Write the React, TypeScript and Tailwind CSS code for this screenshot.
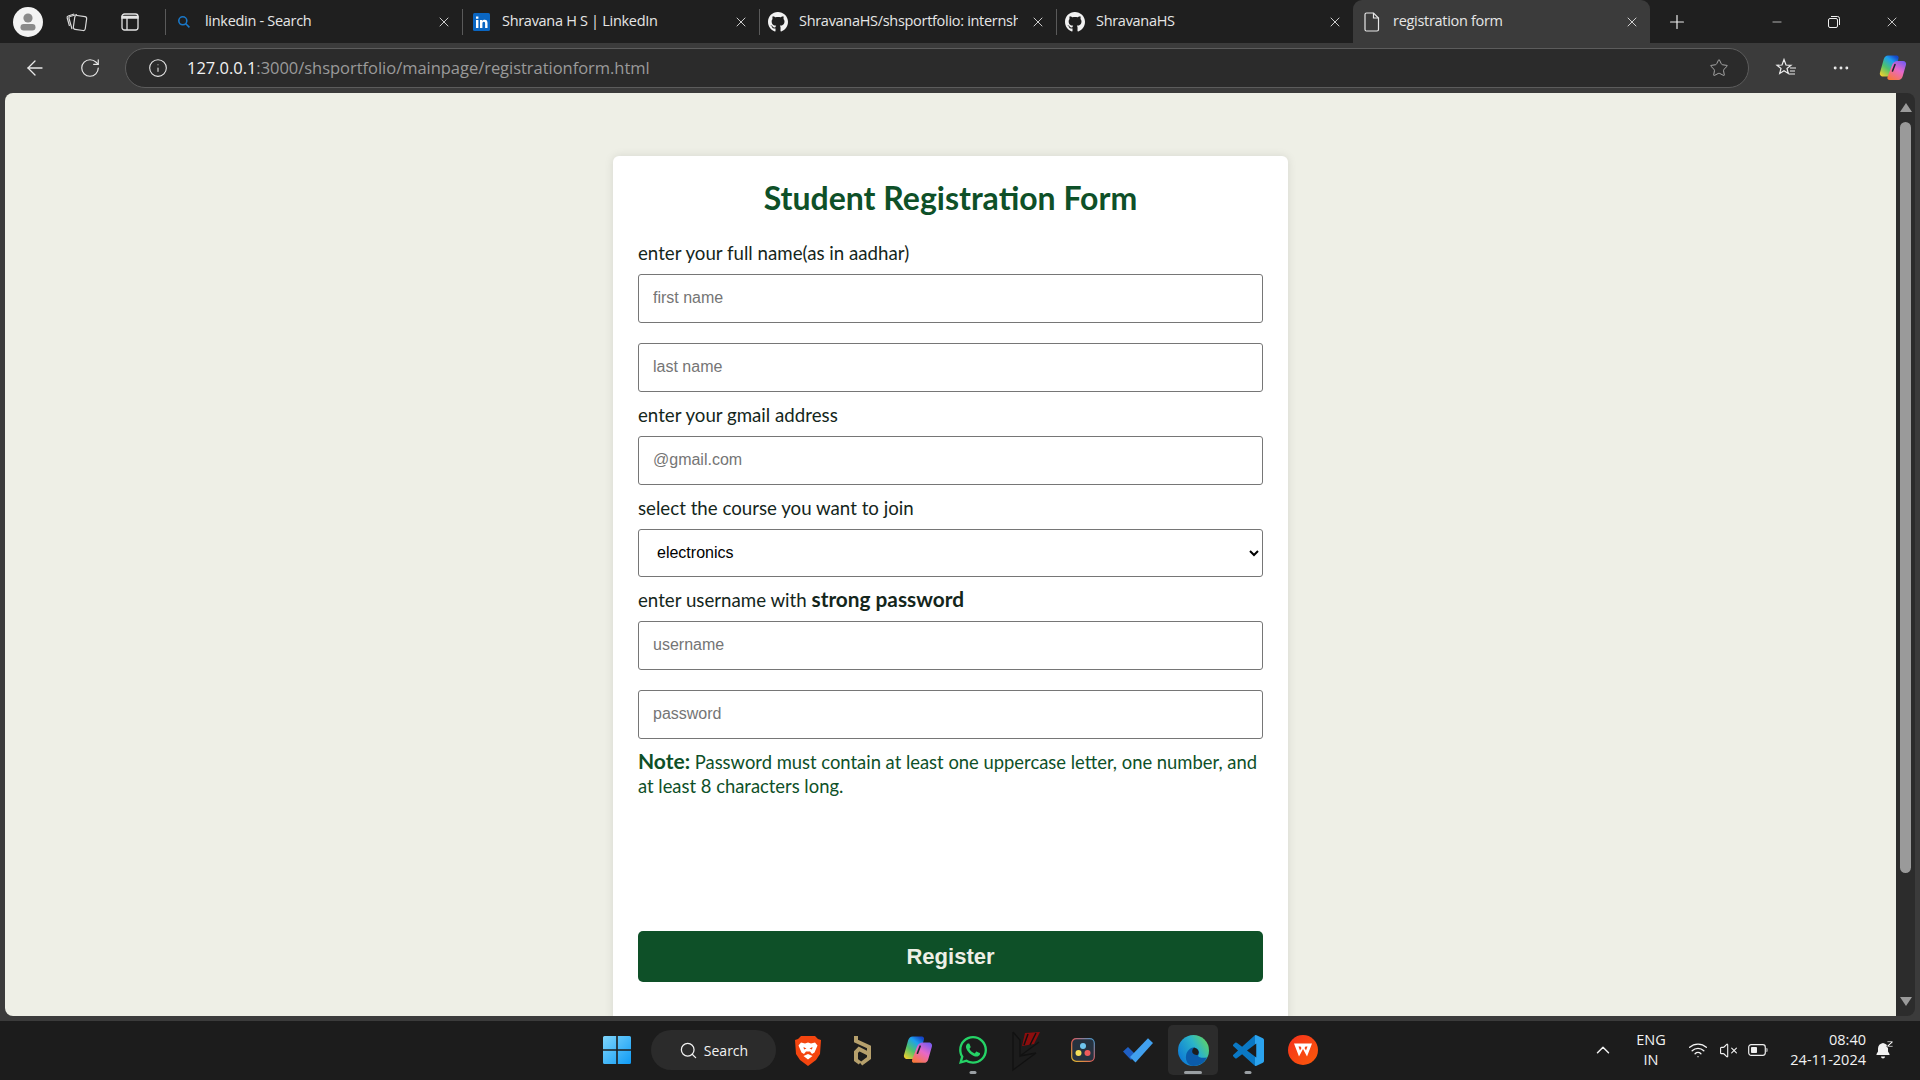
import React from 'react';
import { ArrowLeft, RotateCw, Info, Star, X, Plus, Minus, Search, Wifi, ChevronUp, VolumeX, MoreHorizontal } from 'lucide-react';
import { FaGithub, FaWhatsapp } from 'react-icons/fa';

const Profile = () => (
    <svg width="30" height="30" viewBox="0 0 30 30">
        <circle cx="15" cy="15" r="15" fill="#f3f3f3" />
        <circle cx="15" cy="11" r="4.6" fill="#8a8a8a" />
        <rect x="7.5" y="17" width="15" height="6.5" rx="3.2" fill="#8a8a8a" />
    </svg>
);

const Collections = () => (
    <svg width="22" height="22" viewBox="0 0 22 22" fill="none" stroke="#d8d8d8" strokeWidth="1.2">
        <rect x="8" y="5" width="12" height="14" rx="2" transform="rotate(8 14 12)" />
        <path d="M6 18 3 7.5c-.3-1 .2-1.8 1-2l7-2" />
        <path d="M3.5 15 1.2 7c-.3-1 .1-1.7 1-2l6-2" />
    </svg>
);

const VerticalTabs = () => (
    <svg width="18" height="18" viewBox="0 0 18 18" fill="none" stroke="#e4e4e4" strokeWidth="1.3">
        <rect x="1" y="1" width="16" height="16" rx="2.5" />
        <path d="M1 3.5h16v1.5H1z" fill="#e4e4e4" />
        <path d="M6 5v12" />
    </svg>
);

const TabIconSearch = () => (
    <svg width="14" height="14" viewBox="0 0 14 14" fill="none" stroke="#1a78c9" strokeWidth="1.6">
        <circle cx="5.8" cy="5.8" r="4" />
        <path d="m8.8 8.8 3.6 3.6" />
    </svg>
);

const LinkedIn = () => (
    <svg width="17" height="18" viewBox="0 0 17 18">
        <rect width="17" height="18" rx="1.5" fill="#0a66c2" />
        <path d="M3 7h2.4v8H3zM3 3.4h2.4v2.3H3zM7 7h2.3v1.1c.5-.8 1.3-1.3 2.4-1.3 2 0 2.8 1.2 2.8 3.3V15h-2.4v-4.4c0-1.1-.3-1.8-1.2-1.8-1 0-1.5.7-1.5 1.9V15H7z" fill="#fff" />
    </svg>
);

const DocIcon = () => (
    <svg width="16" height="20" viewBox="0 0 16 20" fill="none" stroke="#e8e8e8" strokeWidth="1.2">
        <path d="M2.5 1h7L14.5 6v11.5a1.5 1.5 0 0 1-1.5 1.5H2.5A1.5 1.5 0 0 1 1 17.5v-15A1.5 1.5 0 0 1 2.5 1z" />
        <path d="M9.5 1v5h5" />
    </svg>
);

const Copilot = ({ size, id }: { size: number; id: string }) => (
    <svg width={size} height={size} viewBox="0 0 28 28">
        <defs>
            <linearGradient id={`${id}a`} x1="0.1" y1="1" x2="0.8" y2="0">
                <stop offset="0" stopColor="#f7d02c" />
                <stop offset="0.4" stopColor="#4fc26b" />
                <stop offset="0.75" stopColor="#1d9ff0" />
                <stop offset="1" stopColor="#1546c8" />
            </linearGradient>
            <linearGradient id={`${id}b`} x1="0.8" y1="0" x2="0.2" y2="1">
                <stop offset="0" stopColor="#7a5cf0" />
                <stop offset="0.45" stopColor="#e868c8" />
                <stop offset="1" stopColor="#f9783a" />
            </linearGradient>
        </defs>
        <path d="M9 1.500h8.500c1.600 0 2.600 1.400 2 3L15 20c-.6 1.700-1.800 2.500-3.400 2.500H4c-2.200 0-3.700-2-3-4L4.800 5C5.600 2.800 7 1.500 9 1.500z" fill={`url(#${id}a)`} />
        <path d="M18 7h6c2.200 0 3.600 1.800 3 3.800l-3.500 12c-.6 2-2 3.200-4 3.200h-9c-1.600 0-2.600-1.400-2-3l5-13c.6-1.500 3-3 4.500-3z" fill={`url(#${id}b)`} />
        <path d="M16 10.500 13.500 17" stroke="#20242c" strokeWidth="1.600" strokeLinecap="round" />
    </svg>
);

const Brave = () => (
    <svg width="26" height="31" viewBox="0 0 26 31">
        <path d="M6 1h14l3 3 3 1-1 14-4 6-8 6-8-6-4-6L0 5l3-1z" fill="#f4450f" />
        <path d="M13 24.500 8.500 21l4.500-2 4.500 2zM6 7.500l4 1 3-1 3 1 4-1 2.500 3-3 7-2.500 1.500-2-2.500h-4L9 19l-2.500-1.500-3-7z" fill="#fff" />
        <path d="M8.500 12l3 1.500-2.500 1zM17.500 12l-3 1.500 2.500 1z" fill="#f4450f" />
    </svg>
);

const GoldMark = () => (
    <svg width="22" height="32" viewBox="0 0 22 32" fill="none" stroke="#b6a06c" strokeWidth="4">
        <path d="M4 2v5l13 6v11l-8 6" />
        <path d="M17 20 7 15 4 18v8l4 3" />
    </svg>
);

const Kite = () => (
    <svg width="32" height="44" viewBox="0 0 32 44" fill="none">
        <path d="M13 5 28 4 22 16 10 18z" fill="#8c0d0d" />
        <path d="M1 4 8 12v16l19-14M1 4v38l23-17-16 3" stroke="#111" strokeWidth="1.300" />
        <path d="M16 6 12 17M24 5 18 17" stroke="#111" strokeWidth="1.500" />
    </svg>
);

const Davinci = () => (
    <svg width="24" height="24" viewBox="0 0 24 24">
        <defs>
            <linearGradient id="dvb" x1="0" y1="1" x2="1" y2="0">
                <stop offset="0" stopColor="#d9b92e" />
                <stop offset="0.5" stopColor="#e05a5a" />
                <stop offset="1" stopColor="#3f9bd0" />
            </linearGradient>
        </defs>
        <rect x="0.700" y="0.700" width="22.600" height="22.600" rx="4.500" fill="#26323f" stroke="url(#dvb)" strokeWidth="1.200" />
        <circle cx="12" cy="8" r="3" fill="#6fc6ef" />
        <circle cx="7.500" cy="15" r="3" fill="#f4e05a" />
        <circle cx="16.500" cy="15" r="3" fill="#ef5b5b" />
    </svg>
);

const TodoCheck = () => (
    <svg width="32" height="26" viewBox="0 0 32 26">
        <path d="M1 14.500 6 10l8 8-5 5z" fill="#1f5fc4" />
        <path d="M26 1.200 31 6 13.500 25.500 8 20z" fill="#41a0ee" />
    </svg>
);

const Edge = () => (
    <svg width="31" height="31" viewBox="0 0 24 24">
        <defs>
            <linearGradient id="edgeg" x1="0.95" y1="0.2" x2="0.05" y2="0.75">
                <stop offset="0" stopColor="#5ed26a" />
                <stop offset="0.4" stopColor="#2bb4c9" />
                <stop offset="1" stopColor="#0e7cd6" />
            </linearGradient>
        </defs>
        <circle cx="12" cy="12" r="12" fill="url(#edgeg)" />
        <path d="M22.500 17.500c-2 4-6 6.500-10.500 6.500-2 0-3.600-1-4.700-2.500-1-1.700-1.500-3.500-1-6 .6-3.200 3-5.400 5.500-5.800 2.500 0 4.500 1.800 4.600 4 .1 1-.8 1.700-.8 2.300 0 1 2 1.700 3.700 1.700 1 0 2-.1 3.200-.2z" fill="#0b5cab" />
        <path d="M11 9.500c2.700 0 5 1.800 5 4 0 .6-.8 1.300-.8 2-2.400-.3-4.200-1-4.200-2.800 0-1.300.6-2.400 1.800-2.800-.6-.3-1.200-.4-1.800-.4z" fill="#1d1d1d" />
    </svg>
);

const VsCode = () => (
    <svg width="31" height="31" viewBox="0 0 24 24">
        <defs>
            <linearGradient id="vsg" x1="0" y1="0" x2="1" y2="0">
                <stop offset="0.7" stopColor="#0a78c4" />
                <stop offset="0.7" stopColor="#2ba3ee" />
            </linearGradient>
        </defs>
        <path d="M23.150 2.587 18.210.21a1.494 1.494 0 0 0-1.705.29l-9.460 8.630-4.120-3.128a.999.999 0 0 0-1.276.057L.327 7.261A1 1 0 0 0 .326 8.740L3.899 12 .326 15.260a1 1 0 0 0 .001 1.479L1.650 17.940a.999.999 0 0 0 1.276.057l4.120-3.128 9.460 8.630a1.492 1.492 0 0 0 1.704.29l4.942-2.377A1.500 1.500 0 0 0 24 20.060V3.939a1.500 1.500 0 0 0-.850-1.352zm-5.146 14.861L10.826 12l7.178-5.448v10.896z" fill="url(#vsg)" />
    </svg>
);

const Wps = () => (
    <svg width="30" height="30" viewBox="0 0 30 30">
        <defs>
            <linearGradient id="wpsg" x1="0" y1="0" x2="1" y2="1">
                <stop offset="0" stopColor="#f5301c" />
                <stop offset="1" stopColor="#fb5b0a" />
            </linearGradient>
        </defs>
        <circle cx="15" cy="15" r="15" fill="url(#wpsg)" />
        <path d="M6 8.500h18l-5 13-4-7.500-4 7.500zM10.500 11.500l1.500 4 1.500-2.500-1-1.500zM19.500 11.500l-1.500 4-1.500-2.500 1-1.500z" fill="#fff" fillRule="evenodd" />
    </svg>
);

const WindowsLogo = () => (
    <svg width="30" height="30" viewBox="0 0 30 30">
        <defs>
            <linearGradient id="wing" x1="0" y1="0" x2="1" y2="1">
                <stop offset="0" stopColor="#7fd5fb" />
                <stop offset="1" stopColor="#0f9bf5" />
            </linearGradient>
        </defs>
        <path d="M1 2.500A1.500 1.500 0 0 1 2.500 1h11.700v13.200H1zM15.800 1h11.700A1.500 1.500 0 0 1 29 2.500v11.700H15.800zM1 15.800h13.200V29H2.500A1.500 1.500 0 0 1 1 27.500zM15.800 15.800H29v11.700a1.500 1.500 0 0 1-1.500 1.500H15.800z" fill="url(#wing)" />
    </svg>
);

const Battery = () => (
    <svg width="20" height="14" viewBox="0 0 20 14" fill="none">
        <rect x="0.700" y="1.700" width="16.600" height="10.600" rx="2.500" stroke="#eee" strokeWidth="1.200" />
        <rect x="3" y="4" width="6" height="6" rx="0.800" fill="#eee" />
        <path d="M18.500 5v4c.8 0 1-.6 1-2s-.2-2-1-2z" fill="#eee" />
    </svg>
);

const BellSleep = () => (
    <svg width="18" height="20" viewBox="0 0 18 20" fill="#f2f2f2">
        <path d="M7 3c-3 .4-5 2.700-5 5.500v3L.5 14v1h13v-1L12 11.500V8.500C12 5.700 10 3.400 7 3zM5 16.500h4a2 2 0 0 1-4 0z" />
        <path d="M11 1h6v1.500l-3.500 3H17V7h-6V5.500L14.500 2.500H11z" stroke="#1c1c1c" strokeWidth="0.800" />
    </svg>
);

const Tab = ({ icon, title, active }: any) => (
    <div className={`flex items-center h-full w-[297px] pl-[9px] pr-[10px] shrink-0 ${active ? 'bg-[#3b3b3b] rounded-t-[9px]' : ''}`}>
        <div className="w-[20px] flex items-center justify-center shrink-0">{icon}</div>
        <span className="ml-[11px] -mt-[2px] flex-1 text-[14.5px] text-[#e6e6e6] whitespace-nowrap overflow-hidden tracking-[-0.3px]">{title}</span>
        <X size={16} strokeWidth={1.3} color="#e8e8e8" className="shrink-0 ml-[12px]" />
    </div>
);

const Sep = () => <div className="w-px h-[26px] bg-[#5a5a5a] shrink-0 -mr-px relative" />;

const Field = ({ placeholder, className }: any) => (
    <input
        placeholder={placeholder}
        className={`block w-full h-[49px] px-[14px] pb-[2px] bg-white border border-[#767676] rounded-[3px] text-[16px] font-['Liberation_Sans',Arial,sans-serif] placeholder:text-[#757575] ${className}`}
    />
);

const Label = ({ children, className }: any) => (
    <p className={`text-[18.7px] leading-[22px] text-[#14261b] ${className}`}>{children}</p>
);

const TaskIcon = ({ children, dot, active }: any) => (
    <div className={`relative w-[50px] mx-[2.5px] h-[50px] flex items-center justify-center rounded-[5px] shrink-0 ${active ? 'bg-[#2c2c2c]' : ''}`}>
        {children}
        {dot && <div className={`absolute bottom-[1px] left-1/2 -translate-x-1/2 h-[3.5px] rounded-full bg-[#9a9fa3] ${active ? 'w-[18px]' : 'w-[7px]'}`} />}
    </div>
);

export default function App() {
    return (
        <div className="w-[1920px] h-[1080px] flex flex-col overflow-hidden bg-[#3b3b3b] font-['Open_Sans',sans-serif]">
            {/* tab strip */}
            <div className="h-[43px] bg-[#1f1f1f] flex items-center shrink-0">
                <div className="ml-[13px] w-[30px]"><Profile /></div>
                <div className="ml-[23px]"><Collections /></div>
                <div className="ml-[33px]"><VerticalTabs /></div>
                <div className="ml-[26px]"><Sep /></div>
                <Tab icon={<TabIconSearch />} title="linkedin - Search" />
                <Sep />
                <Tab icon={<LinkedIn />} title="Shravana H S | LinkedIn" />
                <Sep />
                <Tab icon={<FaGithub size={22} color="#f2f2f2" />} title="ShravanaHS/shsportfolio: internship" />
                <Sep />
                <Tab icon={<FaGithub size={22} color="#f2f2f2" />} title="ShravanaHS" />
                <Tab icon={<DocIcon />} title="registration form" active />
                <Plus size={22} strokeWidth={1.3} color="#eee" className="ml-[16px]" />
                <Minus size={14} strokeWidth={1.2} color="#eee" className="ml-[82px]" />
                <svg width="14" height="14" viewBox="0 0 14 14" fill="none" stroke="#eee" className="ml-[43px]">
                    <rect x="1.500" y="3.500" width="9" height="9" rx="1.500" />
                    <path d="M4 1.500h6.500a2 2 0 0 1 2 2V10" />
                </svg>
                <X size={16} strokeWidth={1.2} color="#eee" className="ml-[43px]" />
            </div>

            {/* toolbar */}
            <div className="h-[50px] bg-[#3b3b3b] flex items-center shrink-0">
                <ArrowLeft size={24} strokeWidth={1.3} color="#e8e8e8" className="ml-[23px]" />
                <RotateCw size={22} strokeWidth={1.3} color="#e8e8e8" className="ml-[32px]" />
                <div className="ml-[24px] w-[1624px] h-[40px] rounded-full bg-[#2b2b2b] border border-[#5c5c5c] flex items-center">
                    <Info size={20} strokeWidth={1.3} color="#e6e6e6" className="ml-[22px]" />
                    <span className="ml-[19px] text-[16.5px] tracking-[-0.03px] text-[#f2f2f2]">127.0.0.1<span className="text-[#9a9a9a]">:3000/shsportfolio/mainpage/registrationform.html</span></span>
                    <Star size={20} strokeWidth={1.2} color="#a5a5a5" className="ml-auto mr-[19px]" />
                </div>
                <svg width="22" height="22" viewBox="0 0 22 22" fill="none" stroke="#eee" strokeWidth="1.200" className="ml-[26px]">
                    <path d="M9 2.500 11 8l5 .3-4 3.200 1.300 5L9 13.800 4.700 16.500 6 11.500 2 8.300 7 8z" />
                    <path d="M15 11h6M15 14h5M14 17h6" />
                </svg>
                <MoreHorizontal size={20} strokeWidth={1.5} color="#eee" className="ml-[34px]" />
                <div className="ml-[28px]"><Copilot size={28} id="cop1" /></div>
            </div>

            {/* page + scrollbar */}
            <div className="h-[923px] flex shrink-0 overflow-hidden">
                <div className="ml-[5px] w-[1891px] bg-[#eeefe6] rounded-tl-[8px] rounded-bl-[8px] overflow-hidden font-['Lato',sans-serif]">
                    <div className="mt-[63px] ml-[608px] w-[675px] bg-white rounded-t-[6px] shadow-[0_0_10px_rgba(0,0,0,0.1)] px-[25px] pt-[24px] pb-[40px]">
                        <h1 className="text-[32px] leading-[36px] font-bold text-center text-[#0e5028]">Student Registration Form</h1>
                        <Label className="mt-[26px]">enter your full name(as in aadhar)</Label>
                        <Field className="mt-[10px]" placeholder="first name" />
                        <Field className="mt-[20px]" placeholder="last name" />
                        <Label className="mt-[12px]">enter your gmail address</Label>
                        <Field className="mt-[10px]" placeholder="@gmail.com" />
                        <Label className="mt-[12px]">select the course you want to join</Label>
                        <select className="block mt-[10px] w-full h-[48px] pl-[14px] pr-[2px] pb-[2px] bg-white border border-[#767676] rounded-[3px] text-[16px] text-black font-['Liberation_Sans',Arial,sans-serif]">
                            <option>electronics</option>
                        </select>
                        <Label className="mt-[11px]">enter username with <b className="text-[20.8px]">strong password</b></Label>
                        <Field className="mt-[10px]" placeholder="username" />
                        <Field className="mt-[20px]" placeholder="password" />
                        <p className="mt-[10px] text-[18.4px] leading-[24px] text-[#0e5028]"><b className="text-[21px]">Note:</b> Password must contain at least one uppercase letter, one number, and at least 8 characters long.</p>
                        <button className="mt-[133px] block w-full h-[51px] bg-[#0e5028] rounded-[5px] text-[22px] font-bold text-[#eeefe6] font-['Liberation_Sans',Arial,sans-serif]">Register</button>
                    </div>
                </div>
                <div className="w-[19px] bg-[#2c2c2c] rounded-r-[8px] flex flex-col items-center">
                    <div className="mt-[10px] w-0 h-0 border-x-[6px] border-x-transparent border-b-[9px] border-b-[#9a9a9a]" />
                    <div className="mt-[10px] w-[11px] h-[751px] bg-[#9a9a9a] rounded-full" />
                    <div className="mt-auto mb-[10px] w-0 h-0 border-x-[6px] border-x-transparent border-t-[9px] border-t-[#9a9a9a]" />
                </div>
            </div>

            {/* gap under the page */}
            <div className="h-[5px] bg-[#3b3b3b] shrink-0" />

            {/* taskbar */}
            <div className="h-[59px] pb-[1px] bg-[#1c1c1c] flex items-center shrink-0 text-[#f2f2f2]">
                <div className="ml-[602px] w-[30px]"><WindowsLogo /></div>
                <div className="ml-[19px] w-[125px] h-[40px] rounded-full bg-[#2b2b2b] flex items-center justify-center gap-[6px]">
                    <Search size={19} strokeWidth={1.6} color="#f2f2f2" />
                    <span className="text-[14px]">Search</span>
                </div>
                <div className="ml-[4.5px] flex items-center">
                    <TaskIcon><Brave /></TaskIcon>
                    <TaskIcon><GoldMark /></TaskIcon>
                    <TaskIcon><Copilot size={30} id="cop2" /></TaskIcon>
                    <TaskIcon dot><FaWhatsapp size={32} color="#25d366" /></TaskIcon>
                    <TaskIcon><Kite /></TaskIcon>
                    <TaskIcon><Davinci /></TaskIcon>
                    <TaskIcon><TodoCheck /></TaskIcon>
                    <TaskIcon dot active><Edge /></TaskIcon>
                    <TaskIcon dot><VsCode /></TaskIcon>
                    <TaskIcon><Wps /></TaskIcon>
                </div>
                <ChevronUp size={22} strokeWidth={1.6} color="#f2f2f2" className="ml-[261.5px]" />
                <div className="ml-[14px] w-[46px] text-center text-[14.5px] leading-[20px]">
                    <div>ENG</div>
                    <div>IN</div>
                </div>
                <Wifi size={20} strokeWidth={1.6} color="#f2f2f2" className="ml-[14px]" />
                <VolumeX size={19} strokeWidth={1.4} color="#f2f2f2" className="ml-[10.5px]" />
                <div className="ml-[10.5px]"><Battery /></div>
                <div className="ml-[20px] w-[78px] text-right text-[14.5px] leading-[20px]">
                    <div>08:40</div>
                    <div className="whitespace-nowrap">24-11-2024</div>
                </div>
                <div className="ml-[10px]"><BellSleep /></div>
            </div>
        </div>
    );
}
